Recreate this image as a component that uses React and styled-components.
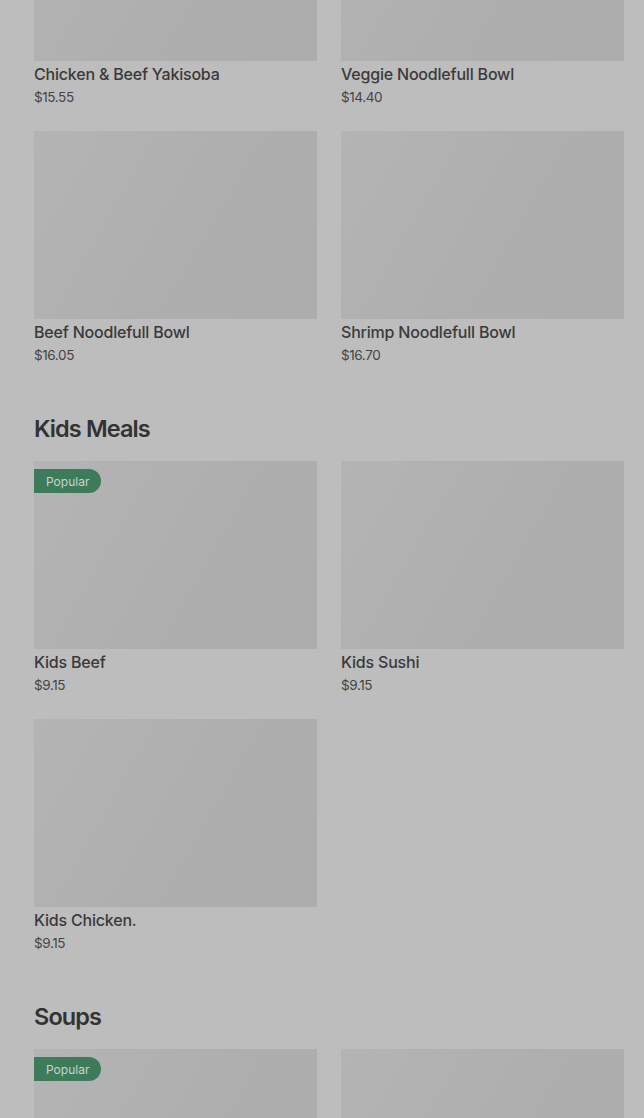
import React from "react";
import styled, { createGlobalStyle } from "styled-components";

const GlobalStyle = createGlobalStyle`
  html, body {
    margin: 0;
    padding: 0;
    background: #bdbdbd;
    overflow: hidden;
  }
  body {
    font-family: Inter, "Noto Sans", sans-serif;
    color: #333;
  }
`;

const Page = styled.div`
  padding: 0 20px 0 34px;
  margin-top: -127px;
  height: 1245px;
  overflow: hidden;
`;

const Section = styled.section`
  & + & {
    margin-top: 48px;
  }
`;

const Heading = styled.h2`
  margin: 0 0 16px;
  font-size: 23.5px;
  line-height: 32px;
  font-weight: 600;
  letter-spacing: -0.9px;
  color: #333;
`;

const Grid = styled.div`
  display: grid;
  grid-template-columns: 283px 283px;
  column-gap: 24px;
  row-gap: 24px;
`;

const Card = styled.div`
  display: flex;
  flex-direction: column;
`;

const Thumb = styled.div`
  position: relative;
  height: 188px;
  background: linear-gradient(120deg, #b4b4b4 0%, #aeaeae 60%, #adadad 100%);
`;

const Badge = styled.span`
  position: absolute;
  top: 8px;
  left: 0;
  height: 24px;
  padding: 0 12px;
  display: flex;
  align-items: center;
  background: #3d7b5b;
  color: #c6d6cb;
  font-size: 12px;
  border-radius: 0 12px 12px 0;
`;

const Name = styled.div`
  margin-top: 1px;
  font-size: 16px;
  line-height: 24px;
  font-weight: 500;
  letter-spacing: -0.2px;
  color: #3a3a3a;
`;

const Price = styled.div`
  margin-top: 1px;
  font-size: 13.5px;
  line-height: 20px;
  letter-spacing: -0.4px;
  color: #444;
`;

const sections = [
  {
    title: null,
    items: [
      { name: "Chicken & Beef Yakisoba", price: "$15.55" },
      { name: "Veggie Noodlefull Bowl", price: "$14.40" },
      { name: "Beef Noodlefull Bowl", price: "$16.05" },
      { name: "Shrimp Noodlefull Bowl", price: "$16.70" },
    ],
  },
  {
    title: "Kids Meals",
    items: [
      { name: "Kids Beef", price: "$9.15", popular: true },
      { name: "Kids Sushi", price: "$9.15" },
      { name: "Kids Chicken.", price: "$9.15" },
    ],
  },
  {
    title: "Soups",
    items: [{ id: "soup-1", popular: true }, { id: "soup-2" }],
  },
];

const App = () => {
  return (
    <>
      <GlobalStyle />
      <Page>
        {sections.map((section, i) => (
          <Section key={i}>
            {section.title && <Heading>{section.title}</Heading>}
            <Grid>
              {section.items.map((item) => (
                <Card key={item.name || item.id}>
                  <Thumb>{item.popular && <Badge>Popular</Badge>}</Thumb>
                  {item.name && <Name>{item.name}</Name>}
                  {item.price && <Price>{item.price}</Price>}
                </Card>
              ))}
            </Grid>
          </Section>
        ))}
      </Page>
    </>
  );
};

export default App;
